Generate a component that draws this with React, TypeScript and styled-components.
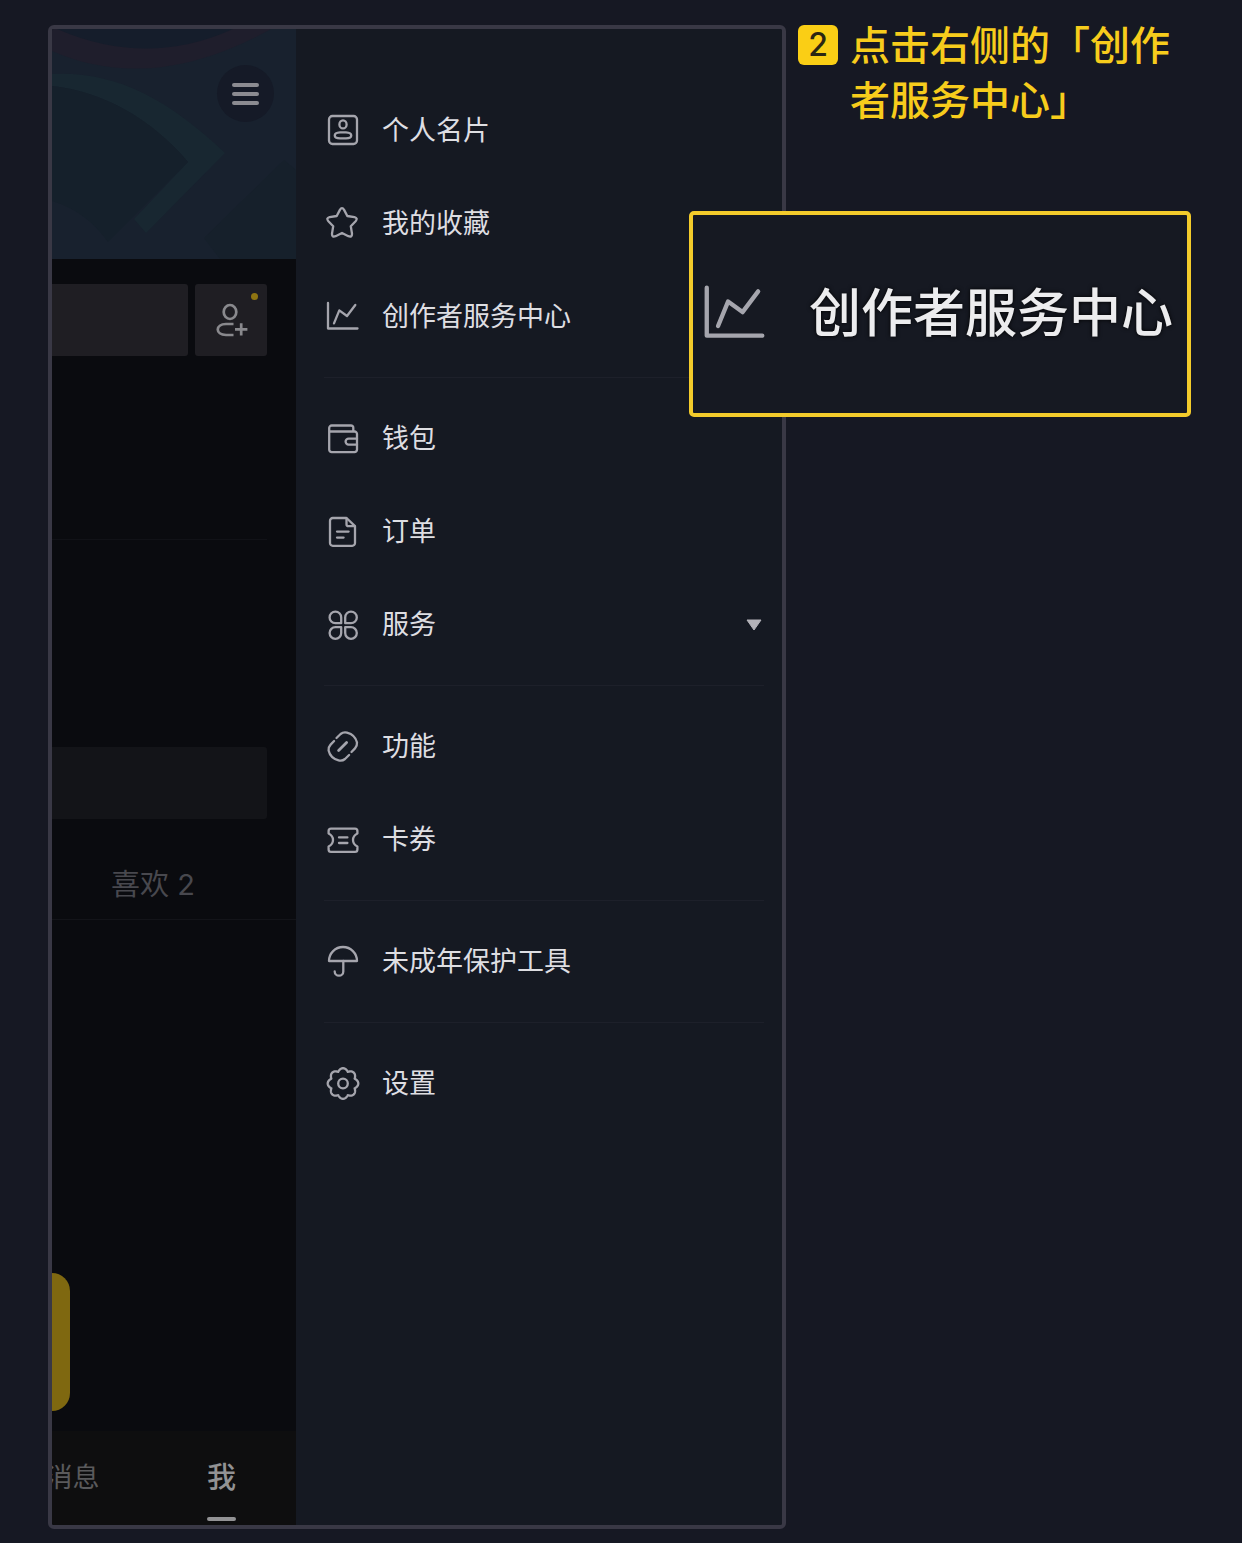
import React from "react";
import styled, { createGlobalStyle } from "styled-components";

const color = {
  page: "#161823",
  drawer: "#151922",
  profile: "#0a0b0f",
  banner: "#18212e",
  frame: "#393845",
  yellow: "#face15",
  text: "#dedee2",
  icon: "#a5a5ad",
};

const GlobalStyle = createGlobalStyle`
  *, *::before, *::after { box-sizing: border-box; }
  body {
    margin: 0;
    background: ${color.page};
    color: ${color.text};
    font-family: "Liberation Sans", "Noto Sans CJK SC", sans-serif;
  }
  button {
    border: 0;
    padding: 0;
    margin: 0;
    background: none;
    color: inherit;
    font: inherit;
    cursor: pointer;
  }
`;

const Page = styled.main`
  display: grid;
  grid-template-columns: minmax(0, 738px) minmax(0, 1fr);
  min-height: 100vh;
  padding: 25px 51px 14px 48px;
`;

const Phone = styled.section`
  display: grid;
  grid-template-columns: minmax(0, 122fr) minmax(0, 243fr);
  border: 4px solid ${color.frame};
  border-radius: 6px;
  overflow: hidden;
`;

/* ---------- dimmed profile page ---------- */

const Profile = styled.div`
  display: flex;
  flex-direction: column;
  background: ${color.profile};
  overflow: hidden;
`;

const Banner = styled.header`
  position: relative;
  display: flex;
  justify-content: flex-end;
  align-items: flex-start;
  height: 230px;
  padding: 36px 22px;
  background: ${color.banner};
`;

const BannerArt = styled.svg`
  position: absolute;
  inset: 0;
  width: 100%;
  height: 100%;
`;

const MenuButton = styled.button`
  position: relative;
  display: flex;
  flex-direction: column;
  align-items: center;
  justify-content: center;
  gap: 5px;
  width: 57px;
  height: 57px;
  border-radius: 50%;
  background: #151a27;
`;

const MenuBar = styled.span`
  width: 27px;
  height: 4px;
  border-radius: 2px;
  background: #8b8b91;
`;

const Actions = styled.div`
  display: flex;
  gap: 7px;
  padding: 25px 29px 0 0;
`;

const EditButton = styled.button`
  flex: 1;
  height: 72px;
  border-radius: 0 3px 3px 0;
  background: #1f1e23;
`;

const AddFriendButton = styled.button`
  position: relative;
  display: grid;
  place-items: center;
  width: 72px;
  height: 72px;
  border-radius: 3px;
  background: #1f1e23;
`;

const NewDot = styled.span`
  position: absolute;
  top: 9px;
  right: 9px;
  width: 7px;
  height: 7px;
  border-radius: 50%;
  background: #8f7512;
`;

const ProfileRule = styled.hr`
  width: calc(100% - 29px);
  height: 1px;
  margin: 183px 29px 207px 0;
  border: 0;
  background: #111217;
`;

const Notice = styled.div`
  flex: none;
  height: 72px;
  margin-right: 29px;
  border-radius: 0 3px 3px 0;
  background: #131418;
`;

const WorkTabs = styled.div`
  display: flex;
  flex: none;
  justify-content: flex-end;
  height: 101px;
  padding-top: 26px;
  border-bottom: 1px solid #131419;
`;

const WorkTab = styled.button`
  flex: none;
  width: 286px;
  color: #48484e;
  font-family: Inter, "Noto Sans CJK SC", sans-serif;
  font-size: 29px;
`;

const Works = styled.div`
  display: flex;
  flex: 1;
  align-items: flex-end;
  padding-bottom: 20px;
`;

const PublishTile = styled.div`
  width: 18px;
  height: 138px;
  border-radius: 0 20px 20px 0;
  background: #7f6810;
`;

const TabBar = styled.nav`
  display: flex;
  flex: none;
  justify-content: flex-end;
  height: 94px;
  background: #0e0e0f;
`;

const TabItem = styled.button<{ $active?: boolean }>`
  display: flex;
  flex: none;
  flex-direction: column;
  align-items: center;
  justify-content: flex-start;
  gap: 18px;
  width: 149px;
  padding-top: 26px;
  line-height: 42px;
  font-size: ${(p) => (p.$active ? 29 : 27)}px;
  font-weight: ${(p) => (p.$active ? 500 : 400)};
  color: ${(p) => (p.$active ? "#929294" : "#5a5a5c")};
`;

const TabMark = styled.span`
  width: 29px;
  height: 4px;
  border-radius: 2px;
  background: #929294;
`;

/* ---------- drawer ---------- */

const Drawer = styled.nav`
  padding: 55px 18px 0 28px;
  background: ${color.drawer};
`;

const MenuGroup = styled.ul`
  margin: 0;
  padding: 0;
  list-style: none;

  & + & {
    margin-top: 14px;
    padding-top: 14px;
    border-top: 1px solid #1d202a;
  }
`;

const MenuItem = styled.button`
  display: flex;
  align-items: center;
  gap: 22px;
  width: 100%;
  height: 93px;
  padding: 0 2px;
  text-align: left;
`;

const MenuLabel = styled.span`
  flex: 1;
  font-size: 27px;
  line-height: 40px;
  white-space: nowrap;
`;

const LineIcon = styled.svg<{ $size: number }>`
  flex: none;
  width: ${(p) => p.$size}px;
  height: ${(p) => p.$size}px;
  fill: none;
  stroke: ${color.icon};
  stroke-width: 2.3;
  stroke-linecap: round;
  stroke-linejoin: round;
`;

/* ---------- annotation ---------- */

const Guide = styled.aside`
  position: relative;
  padding-left: 12px;
`;

const Step = styled.div`
  display: flex;
  align-items: flex-start;
  gap: 12px;
`;

const StepNumber = styled.span`
  flex: none;
  width: 40px;
  border-radius: 6px;
  background: ${color.yellow};
  color: #2b2613;
  font-family: Inter, sans-serif;
  font-size: 32px;
  font-weight: 500;
  line-height: 40px;
  text-align: center;
`;

const StepText = styled.h1`
  margin: -9px 0 0;
  color: #f7cc1c;
  font-family: "Noto Sans CJK SC", sans-serif;
  font-size: 40px;
  font-weight: 500;
  line-height: 55px;
`;

const Callout = styled.div`
  position: absolute;
  top: 186px;
  left: -97px;
  right: 0;
  display: flex;
  align-items: center;
  gap: 42px;
  height: 206px;
  padding: 0 10px;
  border: 4px solid #f3cb2b;
  border-radius: 5px;
  background: #161922;
`;

const CalloutLabel = styled.strong`
  color: #ececee;
  font-size: 52px;
  font-weight: 500;
  line-height: 72px;
  white-space: nowrap;
  text-shadow: 0 0 4px #000;
`;

/* ---------- icons ---------- */

// Eight soft lobes round the centre of the settings icon.
const gearOutline =
  Array.from({ length: 144 }, (_, i) => {
    const a = (i * Math.PI) / 72;
    const r = 12.6 + 2.7 * Math.abs(Math.cos(4 * a));
    return `${i ? "L" : "M"}${(17 + r * Math.cos(a)).toFixed(2)} ${(17.5 + r * Math.sin(a)).toFixed(2)}`;
  }).join("") + "Z";

const glyphs = {
  card: (
    <>
      <rect x="3" y="3" width="28" height="28" rx="3.5" />
      <ellipse cx="17" cy="11.4" rx="3.6" ry="4" />
      <path d="M14 19.4H20C27 19.8 27 25.2 20 25.4H14C7 25.2 7 19.8 14 19.4Z" />
    </>
  ),
  star: (
    <path d="M13.9 3.9Q16 .5 18.1 3.9L21.3 10L28.4 11.2Q32.2 12.2 29.6 15.2L24.8 20.2L26 27.6Q26.2 31.6 22.4 30.2L16 27L9.6 30.2Q5.8 31.6 6 27.6L7.2 20.2L2.4 15.2Q-.2 12.2 3.6 11.2L10.7 10Z" />
  ),
  chart: (
    <>
      <path d="M2 4V29.5H31.5" />
      <path d="M8 24.4L13.3 11.4L21 17L29.3 6" />
    </>
  ),
  wallet: (
    <>
      <path d="M3.2 10.5H28.5A2.5 2.5 0 0 1 31 13V28.6A2.5 2.5 0 0 1 28.5 31.1H5.7A2.5 2.5 0 0 1 3.2 28.6V7A2.5 2.5 0 0 1 5.7 4.5H25A2.3 2.3 0 0 1 27.3 6.8V10.5" />
      <path d="M31 17.6H22.6A3 3 0 0 0 22.6 23.6H31" />
    </>
  ),
  order: (
    <>
      <path d="M6.8 4H20.5L29 12.2V29A2.8 2.8 0 0 1 26.2 31.8H6.8A2.8 2.8 0 0 1 4 29V6.8A2.8 2.8 0 0 1 6.8 4" />
      <path d="M20.5 4.5V10.2A2 2 0 0 0 22.5 12.2H28.5" />
      <path d="M11 17.6H22.6M11 23.6H17.6" />
    </>
  ),
  service: (
    <>
      <path d="M15.2 16.2H9.4A5.8 5.8 0 1 1 15.2 10.4Z" />
      <path d="M19.2 16.2H25A5.8 5.8 0 1 0 19.2 10.4Z" />
      <path d="M15.2 20.2H9.4A5.8 5.8 0 1 0 15.2 26Z" />
      <path d="M19.2 20.2H25A5.8 5.8 0 1 1 19.2 26Z" />
    </>
  ),
  feature: (
    <>
      <path d="M10.5 9L14.6 5Q17.5 2.6 21 3.6C26 5 30 9 31 13.5Q31.3 17 29 19.4L25.5 23" />
      <path d="M23.1 26L19 30Q16.1 32.4 12.6 31.4C7.6 30 3.6 26 2.6 21.5Q2.3 18 4.6 15.6L8.1 12" />
      <path d="M12.6 21.6L20.6 13.6" strokeWidth="2.8" />
    </>
  ),
  coupon: (
    <>
      <path d="M5 6.7H29Q31.4 6.7 31.4 9.1V11.5Q27 13.7 27 18Q27 22.3 31.4 24.5V27.4Q31.4 29.8 29 29.8H5Q2.6 29.8 2.6 27.4V24.5Q7 22.3 7 18Q7 13.7 2.6 11.5V9.1Q2.6 6.7 5 6.7Z" />
      <path d="M13 15.4H21.4M13 21H21.4" />
    </>
  ),
  umbrella: (
    <>
      <path d="M3 17A14 14 0 0 1 31 17Z" />
      <path d="M17.3 17V27.4A4.3 4.3 0 0 1 8.7 27.4" />
    </>
  ),
  settings: (
    <>
      <path d={gearOutline} />
      <circle cx="17" cy="17.5" r="4.8" />
    </>
  ),
};

type GlyphName = keyof typeof glyphs;

function Icon({ name, size = 34 }: { name: GlyphName; size?: number }) {
  return (
    <LineIcon $size={size} viewBox="0 1 34 34" aria-hidden="true">
      {glyphs[name]}
    </LineIcon>
  );
}

const menu: { icon: GlyphName; label: string; expandable?: boolean }[][] = [
  [
    { icon: "card", label: "个人名片" },
    { icon: "star", label: "我的收藏" },
    { icon: "chart", label: "创作者服务中心" },
  ],
  [
    { icon: "wallet", label: "钱包" },
    { icon: "order", label: "订单" },
    { icon: "service", label: "服务", expandable: true },
  ],
  [
    { icon: "feature", label: "功能" },
    { icon: "coupon", label: "卡券" },
  ],
  [{ icon: "umbrella", label: "未成年保护工具" }],
  [{ icon: "settings", label: "设置" }],
];

function ProfilePage() {
  return (
    <Profile>
      <Banner>
        <BannerArt viewBox="0 0 244 230" preserveAspectRatio="xMaxYMin slice" aria-hidden="true">
          <path d="M0 0V22Q100 66 219 0Z" fill="#1f1e2c" />
          <path d="M5 0Q95 39 181 0Z" fill="#151d2b" />
          <path d="M0 45C62 42 114 68 173 124L94 204L82 190L136 133C100 90 50 62 0 57Z" fill="#182731" />
          <path d="M0 57C50 62 100 90 136 133L56 213C40 190 20 178 0 172Z" fill="#15202b" />
          <path d="M152 209L232 131L244 141V230H168Z" fill="#16202b" />
        </BannerArt>
        <MenuButton aria-label="菜单">
          <MenuBar />
          <MenuBar />
          <MenuBar />
        </MenuButton>
      </Banner>
      <Actions>
        <EditButton aria-label="编辑资料" />
        <AddFriendButton aria-label="添加朋友">
          <svg width="34" height="36" viewBox="0 0 34 36" fill="none" stroke="#89898d" strokeWidth="2.7" aria-hidden="true">
            <ellipse cx="16" cy="10" rx="6.3" ry="7" />
            <path d="M19.5 22H12C1 22.4 1 32.6 12 33H19.5" />
            <path d="M21 27.3H33.4M27.2 21.2V33.4" />
          </svg>
          <NewDot />
        </AddFriendButton>
      </Actions>
      <ProfileRule />
      <Notice />
      <WorkTabs>
        <WorkTab>喜欢 2</WorkTab>
      </WorkTabs>
      <Works>
        <PublishTile />
      </Works>
      <TabBar>
        <TabItem>消息</TabItem>
        <TabItem $active>
          我
          <TabMark />
        </TabItem>
      </TabBar>
    </Profile>
  );
}

export default function App() {
  return (
    <>
      <GlobalStyle />
      <Page>
        <Phone>
          <ProfilePage />
          <Drawer>
            {menu.map((group) => (
              <MenuGroup key={group[0].label}>
                {group.map((item) => (
                  <li key={item.label}>
                    <MenuItem>
                      <Icon name={item.icon} />
                      <MenuLabel>{item.label}</MenuLabel>
                      {item.expandable && (
                        <svg width="16" height="12" viewBox="0 0 16 12" aria-hidden="true">
                          <path d="M1 1H15L8 11Z" fill="#b4b3b9" stroke="#b4b3b9" strokeLinejoin="round" />
                        </svg>
                      )}
                    </MenuItem>
                  </li>
                ))}
              </MenuGroup>
            ))}
          </Drawer>
        </Phone>
        <Guide>
          <Step>
            <StepNumber>2</StepNumber>
            <StepText>点击右侧的「创作者服务中心」</StepText>
          </Step>
          <Callout>
            <Icon name="chart" size={64} />
            <CalloutLabel>创作者服务中心</CalloutLabel>
          </Callout>
        </Guide>
      </Page>
    </>
  );
}
